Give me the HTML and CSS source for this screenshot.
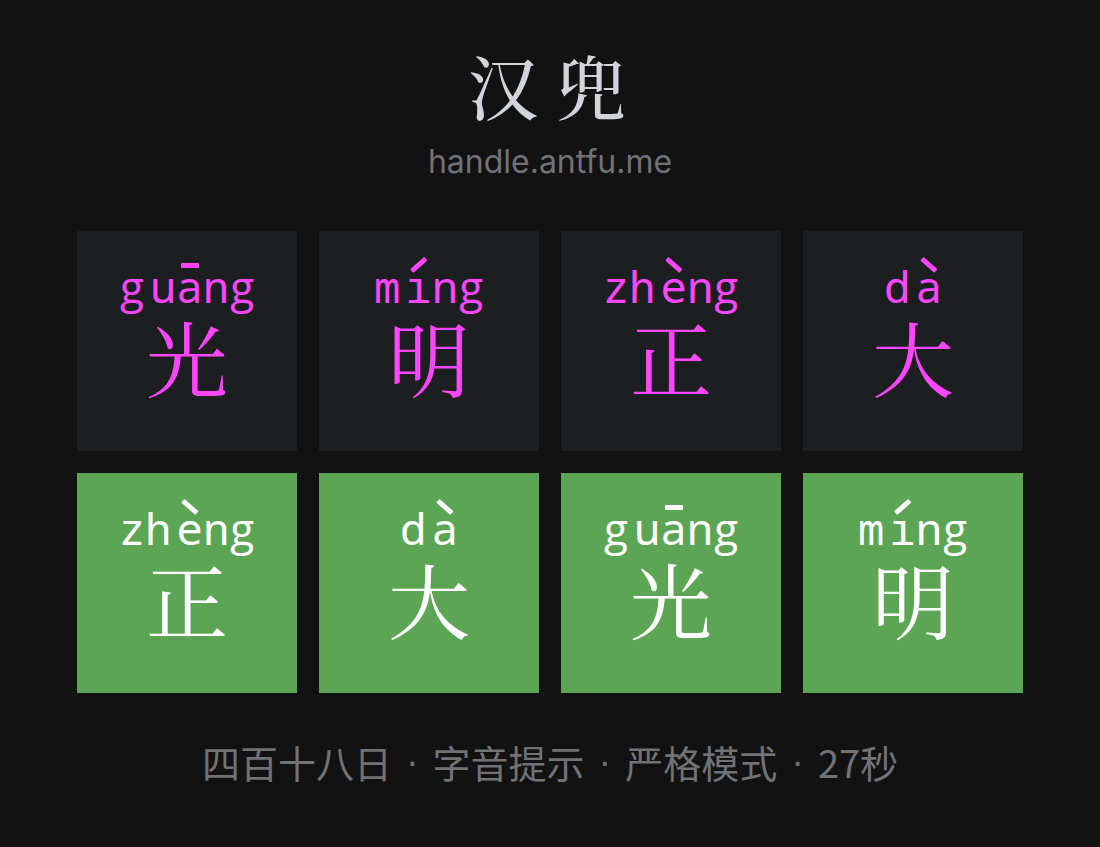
FILE: index.html
```html
<!DOCTYPE html>
<html lang="zh-Hans">
<head>
<meta charset="utf-8">
<meta name="viewport" content="width=device-width, initial-scale=1">
<title>汉兜</title>
<link rel="stylesheet" href="styles.css">
</head>
<body>
<svg class="defs" aria-hidden="true">
<symbol id="tone1" viewBox="0 0 18 16"><rect x="0" y="6" width="18" height="5" rx="1"/></symbol>
<symbol id="tone2" viewBox="0 0 18 16"><path d="M.9 11.6 13.5.6c.5-.4 1-.4 1.4.1l1.8 2.1c.4.5.4 1-.1 1.4L4 15.3c-.5.4-1 .4-1.4-.1L.8 13c-.4-.5-.4-1 .1-1.4Z"/></symbol>
<symbol id="tone4" viewBox="0 0 18 16"><path d="M16.7 11.6 4.1.6C3.6.2 3.1.2 2.7.7L.9 2.8c-.4.5-.4 1 .1 1.4l12.6 11.1c.5.4 1 .4 1.4-.1l1.8-2.2c.4-.5.4-1-.1-1.4Z"/></symbol>
</svg>
<main class="page">
<header class="header">
<h1 class="title"><span>汉</span><span>兜</span></h1>
<a class="site" href="#">handle.antfu.me</a>
</header>
<section class="board">
<div class="tile"><div class="pinyin"><span><span class="g">g</span></span><span>u<span class="toned">a<svg class="tone"><use href="#tone1"/></svg></span>n<span class="g">g</span></span></div><div class="hanzi">光</div></div>
<div class="tile"><div class="pinyin"><span>m</span><span><span class="toned">ı<svg class="tone"><use href="#tone2"/></svg></span>n<span class="g">g</span></span></div><div class="hanzi">明</div></div>
<div class="tile"><div class="pinyin"><span>zh</span><span><span class="toned">e<svg class="tone"><use href="#tone4"/></svg></span>n<span class="g">g</span></span></div><div class="hanzi">正</div></div>
<div class="tile"><div class="pinyin"><span>d</span><span><span class="toned">a<svg class="tone"><use href="#tone4"/></svg></span></span></div><div class="hanzi">大</div></div>
<div class="tile correct"><div class="pinyin"><span>zh</span><span><span class="toned">e<svg class="tone"><use href="#tone4"/></svg></span>n<span class="g">g</span></span></div><div class="hanzi">正</div></div>
<div class="tile correct"><div class="pinyin"><span>d</span><span><span class="toned">a<svg class="tone"><use href="#tone4"/></svg></span></span></div><div class="hanzi">大</div></div>
<div class="tile correct"><div class="pinyin"><span><span class="g">g</span></span><span>u<span class="toned">a<svg class="tone"><use href="#tone1"/></svg></span>n<span class="g">g</span></span></div><div class="hanzi">光</div></div>
<div class="tile correct"><div class="pinyin"><span>m</span><span><span class="toned">ı<svg class="tone"><use href="#tone2"/></svg></span>n<span class="g">g</span></span></div><div class="hanzi">明</div></div>
</section>
<footer class="footer"><span>四百十八日</span><span class="dot">·</span><span>字音提示</span><span class="dot">·</span><span>严格模式</span><span class="dot">·</span><span>27秒</span></footer>
</main>
</body>
</html>
```
FILE: styles.css
```css
* { box-sizing: border-box; }
body { margin: 0; background: #121212; }
.defs { display: none; }
.page {
  display: flex;
  flex-direction: column;
  align-items: center;
  min-height: 100vh;
  padding: 36px 7% 32px;
}
.header { display: flex; flex-direction: column; align-items: center; }
.title {
  display: flex;
  gap: 18px;
  margin: 0;
  padding-right: 6px;
  color: #d1d5db;
  font: 500 70px/98px "Noto Serif CJK SC", "Noto Sans CJK SC", serif;
}
.site {
  margin-top: 4px;
  color: #717276;
  font: 400 32px/48px Inter, sans-serif;
  text-decoration: none;
}
.board {
  display: grid;
  grid-template-columns: repeat(4, 1fr);
  gap: 22px;
  width: 100%;
  margin-top: 45px;
}
.tile {
  display: flex;
  flex-direction: column;
  align-items: center;
  aspect-ratio: 1;
  padding-top: 25px;
  background: #1d1e20;
  color: #ff46ff;
}
.correct { background: #5ca554; color: #fff; }
.pinyin {
  display: flex;
  gap: 5px;
  height: 60px;
  font: 400 44px/60px "Noto Sans Mono", "DejaVu Sans Mono", monospace;
}
.g {
  display: inline-block;
  width: 26px;
  font-family: "Open Sans", sans-serif;
  text-align: center;
}
.toned { display: inline-block; position: relative; }
.tone {
  position: absolute;
  top: 1px;
  left: calc(50% - 9px);
  width: 18px;
  height: 16px;
  fill: currentColor;
}
.hanzi {
  font: 400 82px/80px "Noto Serif CJK SC", "Noto Sans CJK SC", serif;
}
.footer {
  display: flex;
  gap: 14px;
  margin-top: 41px;
  color: #717276;
  font: 400 38px/56px "Noto Sans CJK SC", sans-serif;
}
.dot { font-family: "Liberation Sans", sans-serif; }
```
